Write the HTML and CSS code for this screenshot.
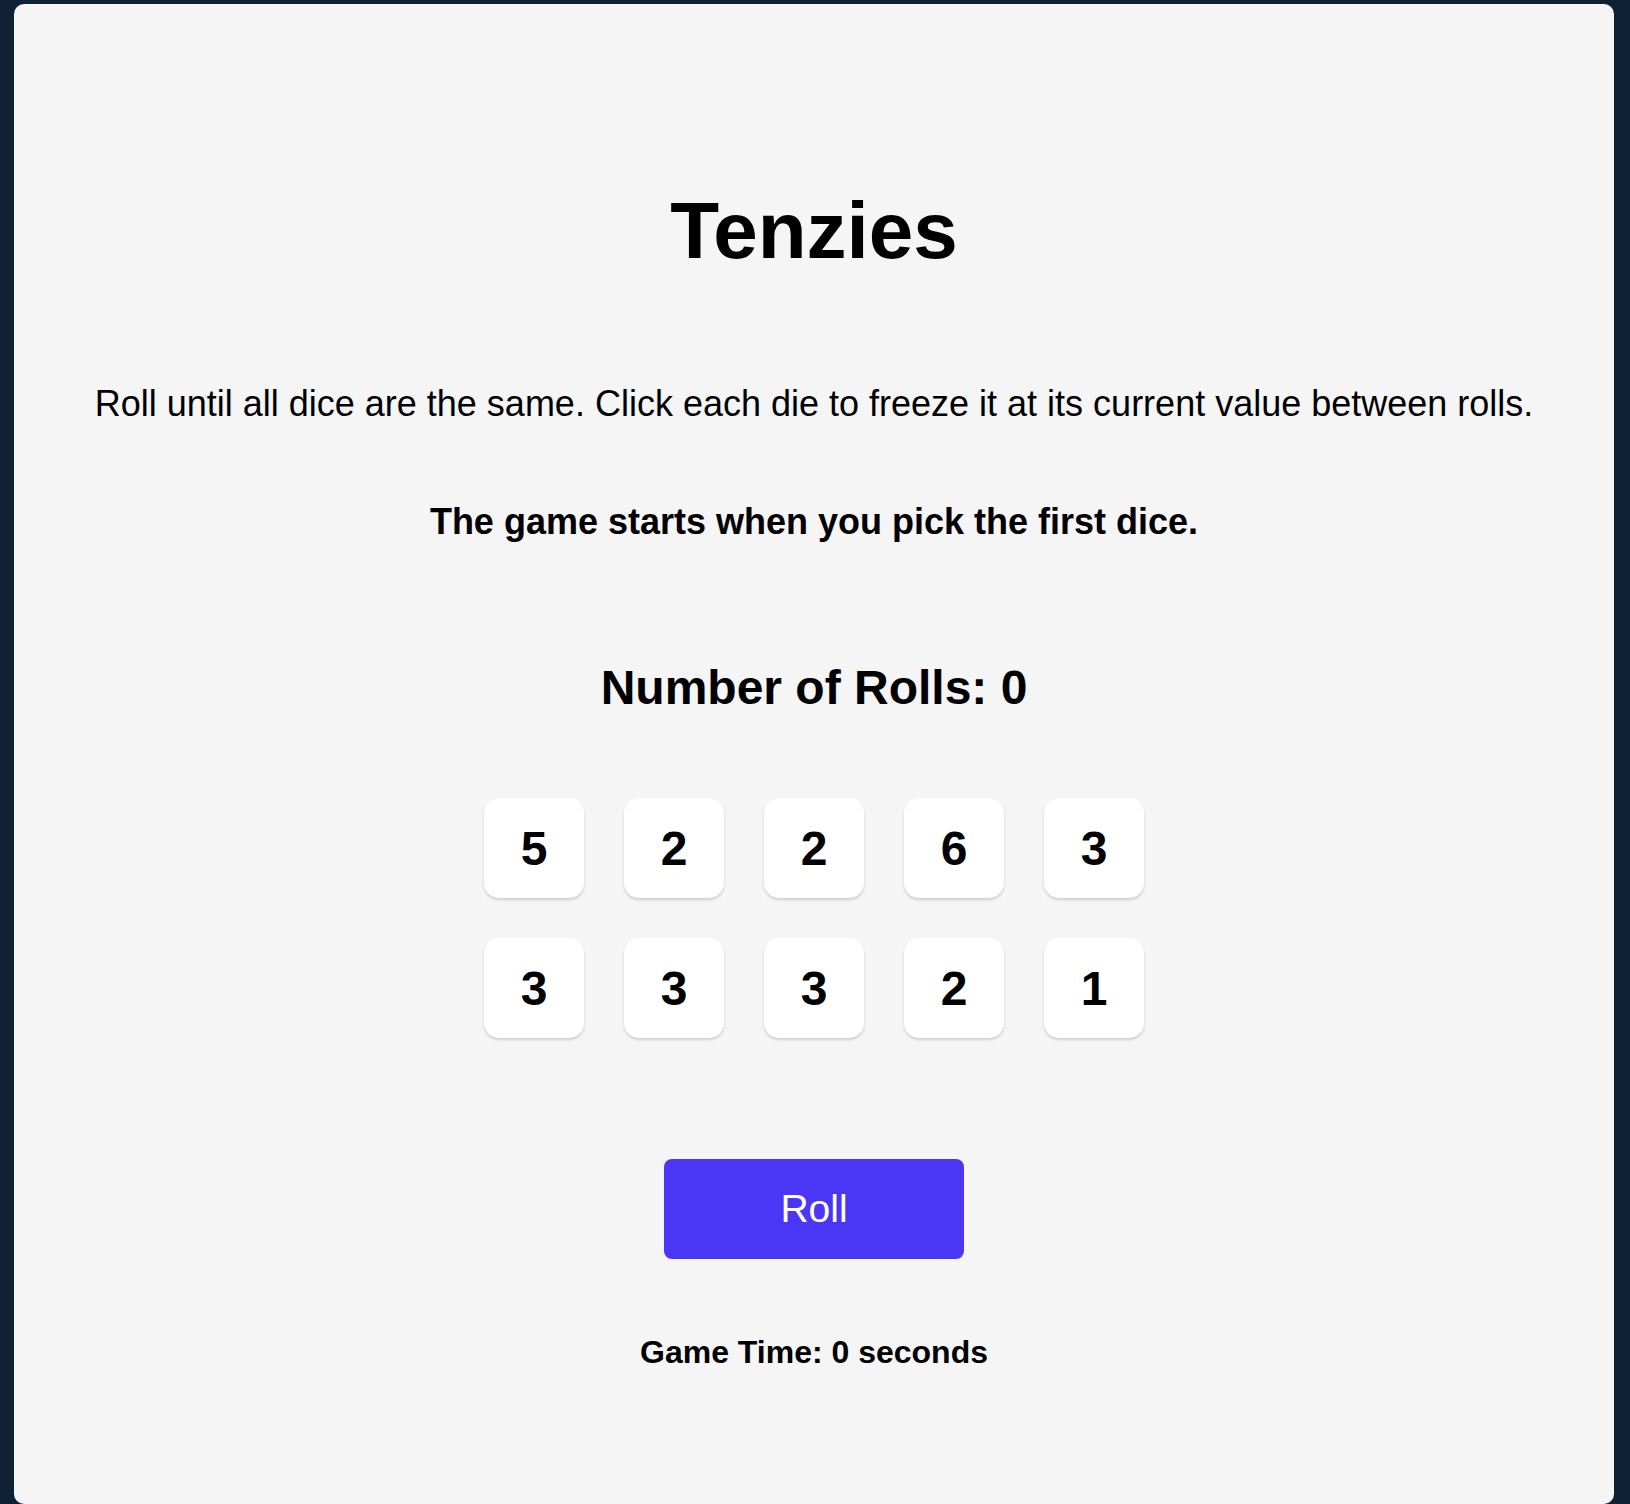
FILE: index.html
```html
<!DOCTYPE html>
<html lang="en">
<head>
<meta charset="utf-8">
<title>Tenzies</title>
<link rel="stylesheet" href="styles.css">
</head>
<body>
<main class="card">
  <h1 class="title">Tenzies</h1>
  <p class="instructions">Roll until all dice are the same. Click each die to freeze it at its current value between rolls.</p>
  <p class="start-note">The game starts when you pick the first dice.</p>
  <h2 class="rolls">Number of Rolls: 0</h2>
  <div class="dice">
    <button class="die">5</button>
    <button class="die">2</button>
    <button class="die">2</button>
    <button class="die">6</button>
    <button class="die">3</button>
    <button class="die">3</button>
    <button class="die">3</button>
    <button class="die">3</button>
    <button class="die">2</button>
    <button class="die">1</button>
  </div>
  <button class="roll-btn">Roll</button>
  <p class="game-time">Game Time: 0 seconds</p>
</main>
</body>
</html>
```

FILE: styles.css
```css
html, body {
  margin: 0;
  padding: 0;
}

body {
  background: #0f2235;
  font-family: "Liberation Sans", Arial, Helvetica, sans-serif;
  color: #000;
  padding-top: 4px;
  padding-left: 14px;
  height: 1504px;
  box-sizing: border-box;
  overflow: hidden;
}

.card {
  width: 1600px;
  height: 1500px;
  box-sizing: border-box;
  background: #f5f5f5;
  border-radius: 10px;
  padding-top: 179px;
  display: flex;
  flex-direction: column;
  align-items: center;
}

.title {
  margin: 0;
  font-size: 80px;
  line-height: 96px;
  font-weight: 700;
}

.instructions {
  margin: 103px 0 0;
  font-size: 36px;
  line-height: 43px;
  font-weight: 400;
  text-align: center;
}

.start-note {
  margin: 75px 0 0;
  font-size: 36px;
  line-height: 43px;
  font-weight: 700;
}

.rolls {
  margin: 116px 0 0;
  font-size: 48px;
  line-height: 57px;
  font-weight: 700;
}

.dice {
  margin-top: 82px;
  display: grid;
  grid-template-columns: repeat(5, 100px);
  grid-auto-rows: 100px;
  gap: 40px;
}

.die {
  border: none;
  background: #fff;
  border-radius: 15px;
  box-shadow: 0 2px 3px rgba(0, 0, 0, 0.16);
  font-family: inherit;
  font-size: 48px;
  font-weight: 700;
  color: #000;
  padding: 0;
  display: flex;
  align-items: center;
  justify-content: center;
}

.roll-btn {
  margin-top: 121px;
  width: 300px;
  height: 100px;
  border: none;
  border-radius: 8px;
  background: #4b36f6;
  color: #fff;
  font-family: inherit;
  font-size: 39px;
  font-weight: 400;
  padding: 0;
}

.game-time {
  margin: 74px 0 0;
  font-size: 32px;
  line-height: 38px;
  font-weight: 700;
}
```
